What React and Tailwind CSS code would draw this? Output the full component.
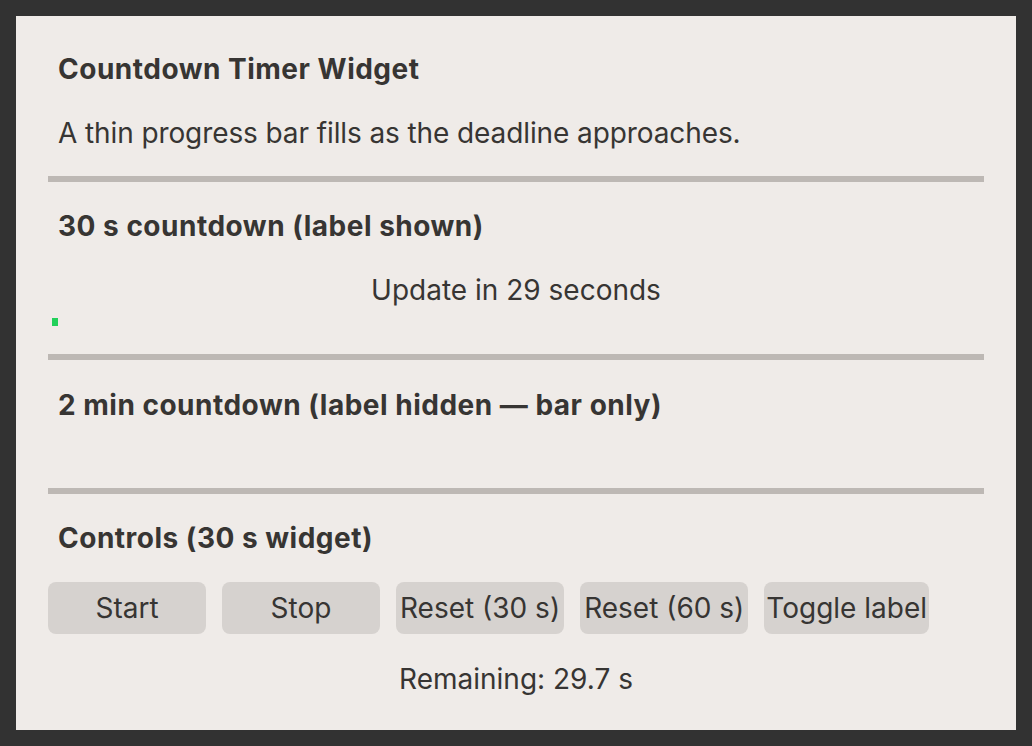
export default function App() {
  const font = { fontFamily: 'Inter, "Noto Sans", sans-serif' };
  const Sep = () => <div className="h-[6px] bg-[#bdb8b4]" />;
  const btn =
    "h-[52px] min-w-[158px] rounded-[8px] bg-[#d6d2cf] text-[28px] leading-[34px] text-[#373533] whitespace-nowrap";
  const h = "ml-[10px] text-[28px] leading-[34px] font-bold tracking-[0.5px]";
  return (
    <div className="min-h-screen bg-[#323232] p-4" style={font}>
      <div className="bg-[#efebe8] px-8 pt-[36px] pb-[34px] text-[#373533]">
        <h1 className={h}>Countdown Timer Widget</h1>
        <p className="ml-[10px] mt-[30px] text-[28px] leading-[34px] tracking-[-0.1px]">
          A thin progress bar fills as the deadline approaches.
        </p>
        <div className="mt-[26px]">
          <Sep />
        </div>
        <h2 className={`${h} mt-[27px]`}>30 s countdown (label shown)</h2>
        <div className="mt-[30px] text-center text-[28px] leading-[34px]">Update in 29 seconds</div>
        <div className="mt-[11px] px-[4px]">
          <div className="h-[8px] w-[6px] bg-[#22d05a]" />
        </div>
        <div className="mt-[28px]">
          <Sep />
        </div>
        <h2 className={`${h} mt-[28px]`}>2 min countdown (label hidden — bar only)</h2>
        <div className="mt-[66px]">
          <Sep />
        </div>
        <h2 className={`${h} mt-[27px]`}>Controls (30 s widget)</h2>
        <div className="mt-[27px] flex gap-4">
          <button className={`${btn} px-[4px]`}>Start</button>
          <button className={`${btn} px-[4px]`}>Stop</button>
          <button className={`${btn} px-[4px]`}>Reset (30 s)</button>
          <button className={`${btn} px-[4px]`}>Reset (60 s)</button>
          <button className={`${btn} px-[2px]`}>Toggle label</button>
        </div>
        <div className="mt-[28px] text-center text-[28px] leading-[34px]">Remaining: 29.7 s</div>
      </div>
    </div>
  );
}
